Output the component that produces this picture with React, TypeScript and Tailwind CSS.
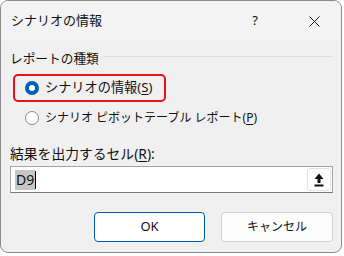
import React from "react";

const font = { fontFamily: '"Noto Sans", "Noto Sans CJK JP", sans-serif' };

function Radio({ checked }: { checked?: boolean }) {
  return checked ? (
    <span className="flex h-[14px] w-[14px] shrink-0 items-center justify-center rounded-full bg-[#005fb8]">
      <span className="h-[6px] w-[6px] rounded-full bg-white" />
    </span>
  ) : (
    <span className="h-[14px] w-[14px] shrink-0 rounded-full border border-[#8a8a8a] bg-white" />
  );
}

export default function App() {
  return (
    <div className="h-[256px] w-[344px] bg-white" style={font}>
      <div className="flex h-[253px] w-[342px] flex-col overflow-hidden rounded-lg border border-[#8c8c8c] bg-[#f0f0f0] text-[#111]">
        {/* title bar */}
        <div className="flex h-[39px] shrink-0 items-center bg-[#f3f3f3] pl-[10px] pt-[1px]">
          <span className="flex-1 text-[13px]">シナリオの情報</span>
          <span className="mr-[51px] text-[13px]">?</span>
          <svg width="11" height="11" viewBox="0 0 11 11" className="mr-[21px]">
            <path d="M0.5 0.5 L10.5 10.5 M10.5 0.5 L0.5 10.5" stroke="#1b1b1b" strokeWidth="1" />
          </svg>
        </div>

        <div className="flex flex-col pl-[9px] pr-[8px]">
          {/* group header */}
          <div className="mt-[9px] flex h-[18px] items-center">
            <span className="text-[12.7px] leading-none">レポートの種類</span>
            <span className="ml-[5px] mt-[-3px] h-px flex-1 bg-[#dcdcdc]" />
          </div>

          <div className="ml-[3px] mt-[7px] flex h-[28px] w-[153px] items-center gap-[6px] rounded-[5px] border-2 border-[#e5121a] pl-[10px]">
            <Radio checked />
            <span className="text-[13.2px] leading-none">
              シナリオの情報(<span className="underline underline-offset-2">S</span>)
            </span>
          </div>

          <div className="ml-[15px] mt-[7px] flex h-[18px] items-center gap-[6px]">
            <Radio />
            <span className="text-[12px] leading-none">
              シナリオ ピボットテーブル レポート(<span className="underline underline-offset-2">P</span>)
            </span>
          </div>

          <div className="mt-[18px] flex h-[18px] items-center text-[13.8px] leading-none">
            結果を出力するセル(<span className="underline underline-offset-2">R</span>):
          </div>

          <div className="mt-[3px] flex h-[27px] items-center border border-[#a6a6a6] border-b-[#7a7a7a] bg-white pl-[4px] pr-[1px]">
            <span className="bg-[#c6c6c6] px-[1px] text-[14px] leading-[20px]">D9</span>
            <span className="h-[18px] w-px bg-black" />
            <span className="flex-1" />
            <span className="flex h-[23px] w-[24px] items-center justify-center rounded-[3px] border border-[#e2e2e2] bg-white">
              <svg width="10" height="14" viewBox="0 0 10 14">
                <path d="M5 0.5 L9.5 6 L6.5 6 L6.5 10 L3.5 10 L3.5 6 L0.5 6 Z" fill="#111" />
                <rect x="0.5" y="11.5" width="9" height="2" fill="#111" />
              </svg>
            </span>
          </div>

          <div className="mt-[19px] flex justify-end gap-[16px]">
            <button className="flex h-[30px] w-[111px] items-center justify-center rounded-[4px] border border-[#00599f] bg-white text-[13px]">
              OK
            </button>
            <button className="flex h-[30px] w-[112px] items-center justify-center rounded-[4px] border border-[#d0d0d0] bg-[#fdfdfd] text-[12px]">
              キャンセル
            </button>
          </div>
        </div>
      </div>
    </div>
  );
}
